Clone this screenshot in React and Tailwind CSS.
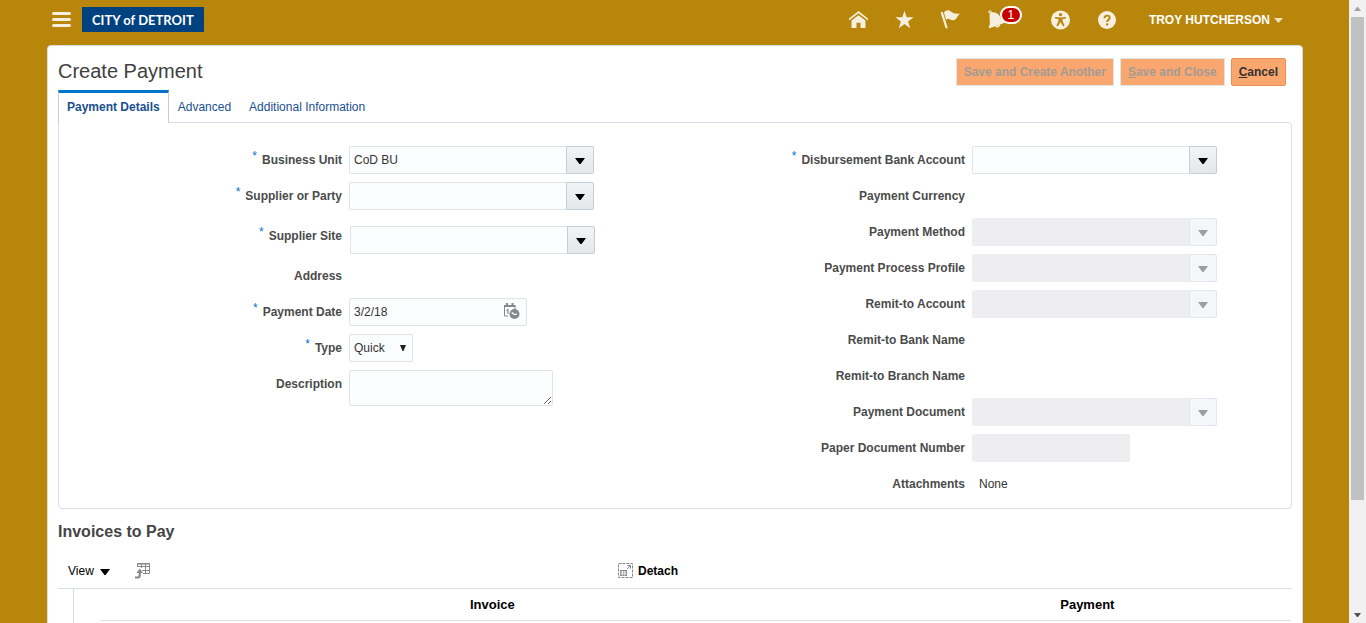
import React from "react";

function Triangle({ className = "" }) {
  return (
    <svg viewBox="0 0 10 6" className={"h-1.5 w-2.5 fill-current " + className} aria-hidden="true">
      <path d="M0 0h10L5.600 6H4.400z" />
    </svg>
  );
}

function NavButton({ label, children }) {
  return (
    <button type="button" aria-label={label} className="relative h-6 w-5 shrink-0">
      <svg viewBox="0 0 20 24" className="h-6 w-5 fill-current" aria-hidden="true">
        {children}
      </svg>
    </button>
  );
}

function Header() {
  return (
    <header className="flex h-[45px] items-start justify-between pr-5 pl-[5px] text-[#f6efdf]">
      <div className="flex items-center gap-[11px] pt-[7px]">
        <button type="button" aria-label="Navigator" className="flex w-[19px] flex-col gap-[3px]">
          <span className="h-[3px] w-full rounded-sm bg-current" />
          <span className="h-[3px] w-full rounded-sm bg-current" />
          <span className="h-[3px] w-full rounded-sm bg-current" />
        </button>
        <a
          href="#home"
          className="flex h-[25px] items-center bg-[#004280] px-[10px] font-['Lato',sans-serif] text-[13px] font-bold whitespace-nowrap text-white"
        >
          CITY of DETROIT
        </a>
      </div>
      <div className="flex items-center gap-[26px] pt-2">
        <NavButton label="Home">
          <path d="M10.500 3 1 10.500v2l9.500-7.200 9.500 7.200v-2z" />
          <path d="M10.500 7.200 3.500 12.400V20h5v-5.200h4V20h5v-7.600z" />
        </NavButton>
        <NavButton label="Favorites">
          <path d="m10.500 2.800 2.200 6.500h6.900l-5.500 4.200 2.100 6.700-5.700-4.100-5.700 4.100 2.100-6.700-5.500-4.200h6.900z" />
        </NavButton>
        <NavButton label="Watchlist">
          <path d="M.6 4.400 2.700 3.700 7.800 20.200H5.600z" />
          <path d="M4 4.800C6 1.900 8.300 1.700 10.800 3.500c2.800 2 5.300 2.700 9.200 2-1.800 1.500-2.600 3.300-3.900 5.200-2.400 2-4.300 1.700-6.200.6-1.500-.9-2.700-.8-3.700.8z" />
        </NavButton>
        <button type="button" aria-label="Notifications" className="relative h-6 w-[38px] shrink-0">
          <svg viewBox="0 0 20 24" className="h-6 w-5 fill-current" aria-hidden="true">
            <circle cx="4" cy="4" r="1.300" fill="none" stroke="currentColor" strokeWidth="1" />
            <path d="M4.500 4.500c4-.8 7.500.6 9.200 3.500 1.400 2.600 2.300 5 5.300 6.800L3.400 20.300c-.8-.4-.7-1.200-.4-1.900 1.400-2.900.8-5.400.6-8.400-.1-2.400 0-4 .9-5.500z" />
            <path d="m9 18.600 5.200-2.200c.5 2-3.600 4.500-5.200 2.200z" />
          </svg>
          <span className="absolute -top-0.5 left-3.5 flex h-[18px] w-[22px] items-center justify-center rounded-full border-2 border-white bg-[#c70000] text-[12px] leading-none text-white">
            1
          </span>
        </button>
        <NavButton label="Accessibility">
          <circle cx="10.500" cy="12" r="9.500" />
          <g fill="#b8860b">
            <circle cx="10.500" cy="6.700" r="1.600" />
            <path d="M5 9c3.600.6 7.400.6 11 0v1.400l-3.500.7.2 2.200 1.900 4.500-1.300.6-2.800-4.300-2.800 4.300-1.300-.6 1.900-4.500.2-2.200-3.500-.7z" />
          </g>
        </NavButton>
        <NavButton label="Help">
          <circle cx="11" cy="12" r="9" />
          <path
            d="M8.500 10.200c0-3.400 5.200-3.400 5.200-.5 0 2-2.600 2-2.600 4.300"
            fill="none"
            stroke="#b8860b"
            strokeWidth="1.900"
          />
          <circle cx="11.100" cy="16.400" r="1.200" fill="#b8860b" />
        </NavButton>
        <button
          type="button"
          className="ml-[7px] flex items-center gap-1 text-[12px] font-bold whitespace-nowrap text-white"
        >
          TROY HUTCHERSON
          <svg viewBox="0 0 9 5" className="h-[5px] w-[9px] fill-[#f0e2bf]" aria-hidden="true">
            <path d="M0 0h9L4.500 5z" />
          </svg>
        </button>
      </div>
    </header>
  );
}

function Row({ label, htmlFor, required, children }) {
  return (
    <div className="flex min-h-7 items-center gap-[7px]">
      <div className="flex w-[283px] shrink-0 justify-end gap-[5px] font-bold text-[#4b4b4b]">
        {required && <span className="-mt-1 font-normal text-[#0572ce]" aria-hidden="true">*</span>}
        {htmlFor ? <label htmlFor={htmlFor}>{label}</label> : <span>{label}</span>}
      </div>
      {children}
    </div>
  );
}

function Combo({ id, label, value = "", disabled = false }) {
  return (
    <div className="flex h-7 w-[245px]">
      <input
        id={id}
        type="text"
        defaultValue={value}
        disabled={disabled}
        className="min-w-0 flex-1 rounded-l-xs border border-r-0 border-[#dfe4e7] bg-[#fcfdfe] px-1 text-[#333] disabled:border-[#eeeef0] disabled:bg-[#eeeef0]"
      />
      <button
        type="button"
        aria-label={"Search: " + label}
        disabled={disabled}
        className="flex w-7 items-center rounded-r-xs border border-[#c4ced7] bg-linear-to-b from-[#f2f4f5] to-[#e3e7ea] pt-0.5 pl-2 text-black disabled:border-[#dfe6ed] disabled:from-[#f5f6f8] disabled:to-[#f5f6f8] disabled:text-[#9e9e9e]"
      >
        <Triangle />
      </button>
    </div>
  );
}

function PaymentForm() {
  return (
    <section className="grid grid-cols-2 rounded-b-sm rounded-tr-sm border border-[#d6dfe6] pt-[23px] pb-[10px]">
      <div className="flex flex-col gap-2">
        <Row label="Business Unit" htmlFor="bu" required>
          <Combo id="bu" label="Business Unit" value="CoD BU" />
        </Row>
        <Row label="Supplier or Party" htmlFor="supplier" required>
          <Combo id="supplier" label="Supplier or Party" />
        </Row>
        <Row label="Supplier Site" htmlFor="site" required>
          <div className="pt-2 pl-px">
            <Combo id="site" label="Supplier Site" />
          </div>
        </Row>
        <Row label="Address" />
        <Row label="Payment Date" htmlFor="date" required>
          <div className="flex h-7 w-[178px] items-center rounded-xs border border-[#dfe4e7] bg-[#fcfdfe] pr-1.5">
            <input
              id="date"
              type="text"
              defaultValue="3/2/18"
              className="min-w-0 flex-1 bg-transparent px-1 text-[#333]"
            />
            <button type="button" aria-label="Select date and time">
              <svg viewBox="0 0 17 18" className="h-[18px] w-[17px]" aria-hidden="true">
                <path d="M5 13H1.500V3h10.500v3" fill="none" stroke="#85898d" strokeWidth="1" />
                <path d="M1 2h11.500v2H1zM3 0h2v3H3zM8.500 0h2v3h-2z" fill="#85898d" />
                <path d="m3.500 7.500 1.500-1V11" fill="none" stroke="#85898d" strokeWidth="1.200" />
                <circle cx="11.500" cy="11" r="5" fill="#85898d" />
                <path d="m8.700 9.600 2.800 2 2.600-.6" fill="none" stroke="#fff" strokeWidth="1.200" />
              </svg>
            </button>
          </div>
        </Row>
        <Row label="Type" htmlFor="type" required>
          <div className="relative h-7 w-16">
            <select
              id="type"
              defaultValue="Quick"
              className="h-7 w-full appearance-none rounded-xs border border-[#dfe4e7] bg-[#fcfdfe] pl-1 text-[#333]"
            >
              <option>Quick</option>
            </select>
            <svg
              viewBox="0 0 6 6"
              className="pointer-events-none absolute top-[11px] right-[7px] size-1.5 fill-[#222]"
              aria-hidden="true"
            >
              <path d="M0 0h6L3.500 6h-1z" />
            </svg>
          </div>
        </Row>
        <div className="flex items-start gap-[7px]">
          <label htmlFor="description" className="w-[283px] shrink-0 text-right leading-7 font-bold text-[#4b4b4b]">
            Description
          </label>
          <textarea
            id="description"
            className="h-9 w-[204px] rounded-xs border border-[#dfe4e7] bg-[#fcfdfe] px-1 py-1"
          />
        </div>
      </div>
      <div className="flex flex-col gap-2 pl-[7px]">
        <Row label="Disbursement Bank Account" htmlFor="bank" required>
          <Combo id="bank" label="Disbursement Bank Account" />
        </Row>
        <Row label="Payment Currency" />
        <Row label="Payment Method" htmlFor="method">
          <Combo id="method" label="Payment Method" disabled />
        </Row>
        <Row label="Payment Process Profile" htmlFor="profile">
          <Combo id="profile" label="Payment Process Profile" disabled />
        </Row>
        <Row label="Remit-to Account" htmlFor="remit">
          <Combo id="remit" label="Remit-to Account" disabled />
        </Row>
        <Row label="Remit-to Bank Name" />
        <Row label="Remit-to Branch Name" />
        <Row label="Payment Document" htmlFor="document">
          <Combo id="document" label="Payment Document" disabled />
        </Row>
        <Row label="Paper Document Number" htmlFor="paper">
          <input id="paper" type="text" disabled className="h-7 w-[158px] rounded-xs bg-[#eeeef0] px-1" />
        </Row>
        <Row label="Attachments">
          <span className="pl-[7px] text-[#333]">None</span>
        </Row>
      </div>
    </section>
  );
}

function Invoices() {
  return (
    <section>
      <h2 className="mt-[11px] text-[16px] leading-6 font-bold text-[#454545]">Invoices to Pay</h2>
      <div className="mt-[9px] flex h-9 items-center border-b border-[#d6dfe6] text-black">
        <div className="flex w-[559px] items-center gap-6 pl-[10px]">
          <button type="button" className="flex items-center gap-1.5">
            View
            <Triangle className="mt-0.5" />
          </button>
          <button type="button" aria-label="Add invoices">
            <svg viewBox="0 0 17 17" className="size-[17px]" fill="none" stroke="#85898d" aria-hidden="true">
              <path d="M3.500 5V1.500h12v10H9M3.500 4.500h12M8 8.500h7.500M7.500 2v4M11.500 2v9.500" />
              <path d="M3 1h13v1.500H3z" fill="#85898d" stroke="none" />
              <path d="M1 15.500h2.500c1.500 0 2.200-.7 2.200-2V10" strokeWidth="2.200" />
              <path d="m5.700 6.500 3.300 4.500H2.400z" fill="#85898d" stroke="none" />
            </svg>
          </button>
        </div>
        <button type="button" className="flex items-center gap-[5px] font-bold">
          <svg viewBox="0 0 16 16" className="size-4" fill="none" stroke="#85898d" aria-hidden="true">
            <path d="M1.500.5h14v14h-14z" strokeDasharray="3 1" strokeWidth="1" />
            <path d="M3 7h7v6H3z" fill="#85898d" stroke="none" />
            <path d="M3.500 9h6M3.500 11h6M5.300 8v4.500M7.700 8v4.500" stroke="#fff" strokeWidth=".8" />
            <path d="M10 6l3-3M10.500 2.500h3v3" />
          </svg>
          Detach
        </button>
      </div>
      <div className="pr-0.5 pl-[15px]">
        <table className="w-full table-fixed border-separate border-spacing-0 border-l border-[#d6dfe6] text-[13px] text-black">
          <thead>
            <tr className="h-8">
              <td className="w-[26px]" />
              <th scope="col" className="border-b border-[#d6dfe6] p-0 font-bold">Invoice</th>
              <th scope="col" className="w-1/3 border-b border-[#d6dfe6] p-0 font-bold">Payment</th>
            </tr>
          </thead>
          <tbody>
            <tr className="h-40">
              <td />
              <td />
              <td />
            </tr>
          </tbody>
        </table>
      </div>
    </section>
  );
}

function ScrollBar() {
  return (
    <div className="flex w-[17px] shrink-0 flex-col bg-[#f1f1f1] px-0.5" aria-hidden="true">
      <div className="flex h-[17px] items-center justify-center">
        <svg viewBox="0 0 7 4" className="h-1 w-[7px] fill-[#a3a3a3]">
          <path d="M3 0h1l3 4H0z" />
        </svg>
      </div>
      <div className="flex-1">
        <div className="h-[82%] bg-[#c1c1c1]" />
      </div>
      <div className="flex h-[17px] items-center justify-center">
        <svg viewBox="0 0 7 4" className="h-1 w-[7px] fill-[#505050]">
          <path d="M0 0h7L4 4H3z" />
        </svg>
      </div>
    </div>
  );
}

export default function App() {
  return (
    <div className="flex h-screen overflow-hidden bg-[#b8860b] font-['Liberation_Sans',Arial,sans-serif] text-[12px] leading-4">
      <div className="min-w-0 flex-1 overflow-hidden pr-[46px] pl-[47px]">
        <Header />
        <main className="rounded-t-sm border border-[#d9dde0] bg-white px-[10px] pt-3">
          <div className="flex h-7 items-center justify-between pr-1.5">
            <h1 className="text-[20px] leading-[26px] text-[#404040] pb-0.5">Create Payment</h1>
            <div className="flex gap-1.5 font-bold">
              <button type="button" disabled className="h-7 border border-[#dfe4e7] bg-[#faa66f] px-[7px] text-[#a39c94]">
                Save and Create Another
              </button>
              <button type="button" disabled className="h-7 border border-[#dfe4e7] bg-[#faa66f] px-[7px] text-[#a39c94]">
                <span className="underline">S</span>ave and Close
              </button>
              <button type="button" className="h-7 rounded-xs border border-[#ee8f52] bg-[#faa66f] px-[7px] text-[#333]">
                <span className="underline">C</span>ancel
              </button>
            </div>
          </div>
          <nav className="mt-1 -mb-px flex h-[33px] text-[#1a4f8f]">
            <a
              href="#details"
              className="relative flex items-center border-x border-t-3 border-[#c3ced8] border-t-[#0572ce] bg-white px-2 pb-0.5 font-bold"
            >
              Payment Details
            </a>
            <a href="#advanced" className="flex items-center px-[9px]">Advanced</a>
            <a href="#additional" className="flex items-center px-[9px]">Additional Information</a>
          </nav>
          <PaymentForm />
          <Invoices />
        </main>
      </div>
      <ScrollBar />
    </div>
  );
}
